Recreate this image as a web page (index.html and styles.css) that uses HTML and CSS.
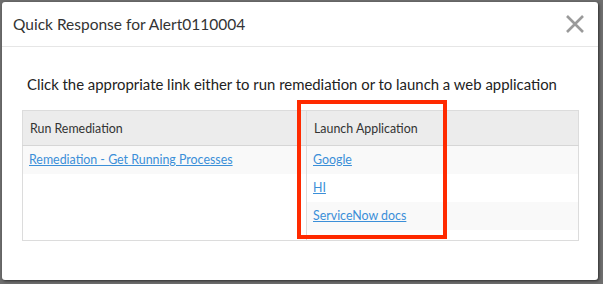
FILE: index.html
```html
<!doctype html>
<html lang="en">
    <head>
        <meta charset="UTF-8" />
        <meta name="viewport" content="width=device-width, initial-scale=1.0" />
        <title>Quick Response</title>
        <link rel="stylesheet" href="styles.css">
    </head>
    <body>
        <div class="modal">
            <div class="modal-header">
                <h4>Quick Response for Alert0110004</h4>
                <button class="close-btn" aria-label="Close">
                    <svg width="18" height="18" viewBox="0 0 18 18">
                        <path d="M1 1 L17 17 M17 1 L1 17" stroke="#9a9a9a" stroke-width="2.6" fill="none" />
                    </svg>
                </button>
            </div>

            <div class="modal-body">
                <p class="intro">Click the appropriate link either to run remediation or to launch a web application</p>

                <table class="response-table">
                    <colgroup>
                        <col class="col-remediation">
                        <col>
                    </colgroup>
                    <thead>
                        <tr>
                            <th class="col-left">Run Remediation</th>
                            <th>Launch Application</th>
                        </tr>
                    </thead>
                    <tbody>
                        <tr>
                            <td class="col-left">
                                <ul class="link-list">
                                    <li><a href="#">Remediation - Get Running Processes</a></li>
                                </ul>
                            </td>
                            <td>
                                <ul class="link-list">
                                    <li><a href="#">Google</a></li>
                                    <li><a href="#">HI</a></li>
                                    <li><a href="#">ServiceNow docs</a></li>
                                </ul>
                            </td>
                        </tr>
                    </tbody>
                </table>
            </div>

            <!-- annotation box -->
            <div class="highlight"></div>
        </div>
    </body>
</html>
```

FILE: styles.css
```css
body {
    margin: 0;
    padding: 2px 5px 4px 2px;
    background-color: #6e6e6e;
    font-family: Lato, "Open Sans", sans-serif;
    color: #333;
}

.modal {
    position: relative;
    height: 278px;
    background-color: #fff;
    border-radius: 3px;
    box-shadow: 1px 1px 3px rgba(0, 0, 0, 0.6);
    box-sizing: border-box;
}

.modal-header {
    display: flex;
    align-items: center;
    justify-content: space-between;
    height: 44px;
    padding: 0 14px 0 11px;
    border-bottom: 1px solid #e6e6e6;
}

.modal-header h4 {
    margin: 0;
    font-size: 15.5px;
    font-weight: normal;
    color: #333;
}

.close-btn {
    background: none;
    border: none;
    padding: 0;
    width: 18px;
    height: 18px;
    cursor: pointer;
}

.close-btn svg {
    display: block;
}

.modal-body {
    padding: 27px 19px 0 20px;
}

.intro {
    margin: 0 0 16px 5px;
    font-size: 14.9px;
    line-height: 20px;
    color: #222;
}

.response-table {
    width: 100%;
    table-layout: fixed;
    border-collapse: collapse;
    border: 1px solid #dcdcdc;
    font-size: 12.4px;
}

.col-remediation {
    width: 284px;
}

.response-table th {
    height: 34px;
    padding: 0 7px;
    text-align: left;
    font-weight: normal;
    color: #333;
    background-color: #ececec;
    border-bottom: 1px solid #d6d6d6;
}

.response-table td {
    padding: 0 0 10px 0;
    vertical-align: top;
}

.col-left {
    border-right: 1px solid #dcdcdc;
}

.link-list {
    list-style: none;
    margin: 0;
    padding: 0;
}

.link-list li {
    height: 28px;
    line-height: 28px;
    padding: 0 6px;
}

.link-list li:nth-child(odd) {
    background-color: #f9f9f9;
}

.link-list a {
    color: #3b8fd8;
    text-decoration: underline;
}

.highlight {
    position: absolute;
    left: 295px;
    top: 98px;
    width: 142px;
    height: 131px;
    border: 4px solid #ff2a00;
}
```
